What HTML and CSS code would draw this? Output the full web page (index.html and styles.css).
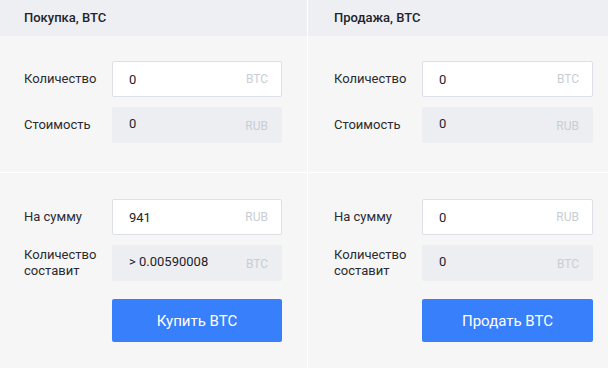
FILE: index.html
```html
<!DOCTYPE html>
<html lang="ru">
<head>
<meta charset="utf-8">
<link rel="stylesheet" href="styles.css">
</head>
<body>
<div class="panel">
  <div class="col col-buy">
    <div class="head">Покупка, BTC</div>
    <div class="sec sec-top">
      <div class="row">
        <div class="label">Количество</div>
        <div class="field"><span class="val">0</span><span class="unit">BTC</span></div>
      </div>
      <div class="row">
        <div class="label">Стоимость</div>
        <div class="field field-ro"><span class="val">0</span><span class="unit">RUB</span></div>
      </div>
    </div>
    <div class="sec sec-bottom">
      <div class="row">
        <div class="label">На сумму</div>
        <div class="field"><span class="val">941</span><span class="unit">RUB</span></div>
      </div>
      <div class="row">
        <div class="label">Количество<br>составит</div>
        <div class="field field-ro"><span class="val">&gt; 0.00590008</span><span class="unit">BTC</span></div>
      </div>
      <div class="row row-btn">
        <div class="label"></div>
        <button class="btn">Купить BTC</button>
      </div>
    </div>
  </div>
  <div class="col col-sell">
    <div class="head">Продажа, BTC</div>
    <div class="sec sec-top">
      <div class="row">
        <div class="label">Количество</div>
        <div class="field"><span class="val">0</span><span class="unit">BTC</span></div>
      </div>
      <div class="row">
        <div class="label">Стоимость</div>
        <div class="field field-ro"><span class="val">0</span><span class="unit">RUB</span></div>
      </div>
    </div>
    <div class="sec sec-bottom">
      <div class="row">
        <div class="label">На сумму</div>
        <div class="field"><span class="val">0</span><span class="unit">RUB</span></div>
      </div>
      <div class="row">
        <div class="label">Количество<br>составит</div>
        <div class="field field-ro"><span class="val">0</span><span class="unit">BTC</span></div>
      </div>
      <div class="row row-btn">
        <div class="label"></div>
        <button class="btn">Продать BTC</button>
      </div>
    </div>
  </div>
</div>
</body>
</html>
```
FILE: styles.css
```css
html, body {
  margin: 0;
  padding: 0;
  background: #ffffff;
}
body {
  font-family: Roboto, "Liberation Sans", Arial, sans-serif;
  color: #2b2b33;
  width: 608px;
  height: 368px;
  overflow: hidden;
}
.panel {
  display: flex;
  gap: 1px;
  background: #ffffff;
  height: 368px;
}
.col {
  display: flex;
  flex-direction: column;
  gap: 0;
}
.col-buy { width: 307px; }
.col-sell { width: 300px; }
.head {
  height: 36px;
  line-height: 36px;
  background: #eeeff2;
  font-size: 13px;
  font-weight: 500;
  color: #23232b;
}
.sec {
  background: #f6f6f6;
  display: flex;
  flex-direction: column;
  gap: 10px;
}
.sec-top {
  padding-top: 25px;
  padding-bottom: 29px;
}
.sec-bottom {
  margin-top: 1px;
  padding-top: 26px;
  flex: 1;
}
.col-buy .head, .col-buy .sec { padding-left: 24px; padding-right: 25px; }
.col-sell .head, .col-sell .sec { padding-left: 26px; padding-right: 15px; }
.row {
  display: flex;
  align-items: center;
}
.row-btn { margin-top: 8px; }
.label {
  width: 88px;
  flex: none;
  font-size: 13px;
  line-height: 16px;
  color: #2b2b33;
}
.field {
  flex: 1;
  height: 36px;
  box-sizing: border-box;
  border: 1px solid #dde0e6;
  border-radius: 2px;
  background: #ffffff;
  display: flex;
  align-items: center;
  justify-content: space-between;
  padding: 0 13px 0 16px;
}
.field-ro {
  background: #eceef1;
  border-color: #eceef1;
}
.val {
  font-size: 13px;
  color: #23232b;
}
.field-ro .val {
  margin-top: -3px;
}
.unit {
  font-size: 12px;
  color: #c9cdd5;
}
.field-ro .unit { margin-top: 2px; }
.btn {
  flex: 1;
  height: 43px;
  border: none;
  border-radius: 2px;
  background: #3880fb;
  color: #ffffff;
  font-family: Roboto, "Liberation Sans", Arial, sans-serif;
  font-size: 15px;
  padding: 0;
}
```
